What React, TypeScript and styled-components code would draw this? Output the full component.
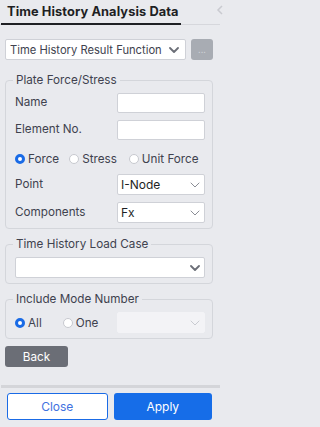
import React from 'react';
import styled, { createGlobalStyle } from 'styled-components';

const GlobalStyle = createGlobalStyle`
  html, body {
    margin: 0;
    padding: 0;
    background: #e9eaee;
    overflow: hidden;
  }
  body {
    font-family: Inter, "Noto Sans", "Liberation Sans", sans-serif;
    color: #40424e;
  }
`;

const Chevron: React.FC<{ color?: string; bold?: boolean }> = ({ color = '#8b8e96', bold }) => (
  <svg width="10" height="6" viewBox="0 0 10 6">
    <path
      d="M1 1 L5 5 L9 1"
      fill="none"
      stroke={color}
      strokeWidth={bold ? 1.8 : 1}
      strokeLinecap="round"
      strokeLinejoin="round"
    />
  </svg>
);

const App: React.FC = () => {
  return (
    <>
      <GlobalStyle />
      <Panel>
        <Header>
          <Tab>Time History Analysis Data</Tab>
          <CollapseIcon width="10" height="12" viewBox="0 0 10 12">
            <path d="M6 2 L2 6 L6 10" fill="none" stroke="#c9cad0" strokeWidth="1.5" />
          </CollapseIcon>
        </Header>

        <Body>
          <TopRow>
            <Select wide>
              <SelectText>Time History Result Function</SelectText>
              <Chevron color="#6b6e77" bold />
            </Select>
            <MoreButton>...</MoreButton>
          </TopRow>

          <Group>
            <Legend>Plate Force/Stress</Legend>
            <Rows>
              <Row>
                <Label>Name</Label>
                <Input />
              </Row>
              <Row>
                <Label>Element No.</Label>
                <Input />
              </Row>
              <RadioRow>
                <Radio checked>Force</Radio>
                <Radio gap={10}>Stress</Radio>
                <Radio gap={12}>Unit Force</Radio>
              </RadioRow>
              <Row>
                <Label>Point</Label>
                <Select>
                  <SelectValue>I-Node</SelectValue>
                  <Chevron />
                </Select>
              </Row>
              <Row>
                <Label>Components</Label>
                <Select>
                  <SelectValue>Fx</SelectValue>
                  <Chevron />
                </Select>
              </Row>
            </Rows>
          </Group>

          <Group top={8}>
            <Legend>Time History Load Case</Legend>
            <Rows>
              <Select full>
                <span />
                <Chevron color="#6b6e77" bold />
              </Select>
            </Rows>
          </Group>

          <Group top={8}>
            <Legend>Include Mode Number</Legend>
            <Rows>
              <Row>
                <ModeRadios>
                  <Radio checked>All</Radio>
                  <Radio gap={21}>One</Radio>
                </ModeRadios>
                <Select disabled>
                  <span />
                  <Chevron color="#c9cbd1" />
                </Select>
              </Row>
            </Rows>
          </Group>

          <BackButton>Back</BackButton>
        </Body>

        <Footer>
          <CloseButton>Close</CloseButton>
          <ApplyButton>Apply</ApplyButton>
        </Footer>
      </Panel>
    </>
  );
};

const Radio: React.FC<{ checked?: boolean; gap?: number; children: React.ReactNode }> = ({
  checked,
  gap = 0,
  children,
}) => (
  <RadioLabel gap={gap}>
    <RadioDot checked={checked} />
    {children}
  </RadioLabel>
);

// Styled Components
const Panel = styled.div`
  width: 220px;
  height: 427px;
  display: flex;
  flex-direction: column;
`;

const Header = styled.div`
  height: 25px;
  display: flex;
  align-items: flex-start;
  justify-content: space-between;
  border-bottom: 1px solid #d6d7dc;
  box-sizing: border-box;
`;

const Tab = styled.div`
  margin-left: 1px;
  width: 180px;
  height: 25px;
  box-sizing: border-box;
  padding: 4px 0 0 6px;
  border-bottom: 2px solid #1f2024;
  font-size: 12.8px;
  font-weight: 700;
  color: #1e1f24;
  letter-spacing: 0.1px;
  white-space: nowrap;
`;

const CollapseIcon = styled.svg`
  margin-top: 4px;
  margin-right: -6px;
`;

const Body = styled.div`
  flex: 1;
  padding: 14px 7px 0 5px;
`;

const TopRow = styled.div`
  display: flex;
  gap: 5px;
  height: 21px;
`;

const Select = styled.div<{ wide?: boolean; full?: boolean; disabled?: boolean }>`
  box-sizing: border-box;
  height: 21px;
  width: ${(p) => (p.wide ? '181px' : p.full ? '100%' : '88px')};
  display: flex;
  align-items: center;
  justify-content: space-between;
  padding: 0 ${(p) => (p.wide ? '6px' : '4px')} 0 ${(p) => (p.wide ? '4px' : '3px')};
  background: ${(p) => (p.disabled ? '#f3f3f6' : '#ffffff')};
  border: 1px solid ${(p) => (p.disabled ? '#f3f3f6' : '#cfd1d7')};
  border-radius: 2px;
`;

const SelectText = styled.span`
  font-size: 11.2px;
  color: #40424e;
  white-space: nowrap;
`;

const SelectValue = styled.span`
  font-size: 12px;
  color: #1e1f24;
`;

const MoreButton = styled.div`
  width: 22px;
  height: 21px;
  border-radius: 3px;
  background: #a8acb3;
  color: #cdd0d5;
  font-size: 9px;
  display: flex;
  align-items: center;
  justify-content: center;
`;

const Group = styled.fieldset<{ top?: number }>`
  margin: ${(p) => p.top ?? 13}px 0 0 0;
  padding: 0 7px 5px 9px;
  border: 1px solid #d4d6db;
  border-radius: 4px;
  min-width: 0;
`;

const Legend = styled.legend`
  padding: 0 3px;
  margin-left: -2px;
  font-size: 11.7px;
  line-height: 14px;
  color: #40424e;
`;

const Rows = styled.div`
  display: flex;
  flex-direction: column;
  gap: 7px;
  padding-top: 6px;
`;

const Row = styled.div`
  display: flex;
  align-items: center;
  justify-content: space-between;
`;

const Label = styled.span`
  font-size: 11.7px;
  color: #40424e;
  padding-bottom: 2px;
`;

const Input = styled.div`
  box-sizing: border-box;
  width: 88px;
  height: 20px;
  background: #ffffff;
  border: 1px solid #cfd1d7;
  border-radius: 2px;
`;

const RadioRow = styled.div`
  display: flex;
  align-items: center;
  height: 20px;
  padding-top: 4px;
  box-sizing: border-box;
`;

const ModeRadios = styled.div`
  display: flex;
  align-items: center;
`;

const RadioLabel = styled.label<{ gap: number }>`
  display: flex;
  align-items: center;
  gap: 3px;
  margin-left: ${(p) => p.gap}px;
  font-size: 11.7px;
  color: #40424e;
`;

const RadioDot = styled.span<{ checked?: boolean }>`
  box-sizing: border-box;
  width: 10px;
  height: 10px;
  border-radius: 50%;
  background: #ffffff;
  border: ${(p) => (p.checked ? '3px solid #1a6be6' : '1px solid #c7c9cf')};
`;

const BackButton = styled.div`
  margin-top: 7px;
  width: 63px;
  height: 21px;
  border-radius: 3px;
  background: #6b6e76;
  color: #ffffff;
  font-size: 11.7px;
  display: flex;
  align-items: center;
  justify-content: center;
`;

const Footer = styled.div`
  margin-left: 1px;
  border-top: 3px solid #d4d5d9;
  margin-top: -1px;
  padding: 5px 8px 7px 6px;
  display: flex;
  gap: 6px;
`;

const BaseButton = styled.div`
  flex: 1;
  height: 27px;
  box-sizing: border-box;
  border-radius: 3px;
  font-size: 12px;
  display: flex;
  align-items: center;
  justify-content: center;
`;

const CloseButton = styled(BaseButton)`
  background: #ffffff;
  border: 1px solid #1a6be6;
  color: #3f72e0;
`;

const ApplyButton = styled(BaseButton)`
  background: #166de8;
  color: #ffffff;
`;

export default App;
